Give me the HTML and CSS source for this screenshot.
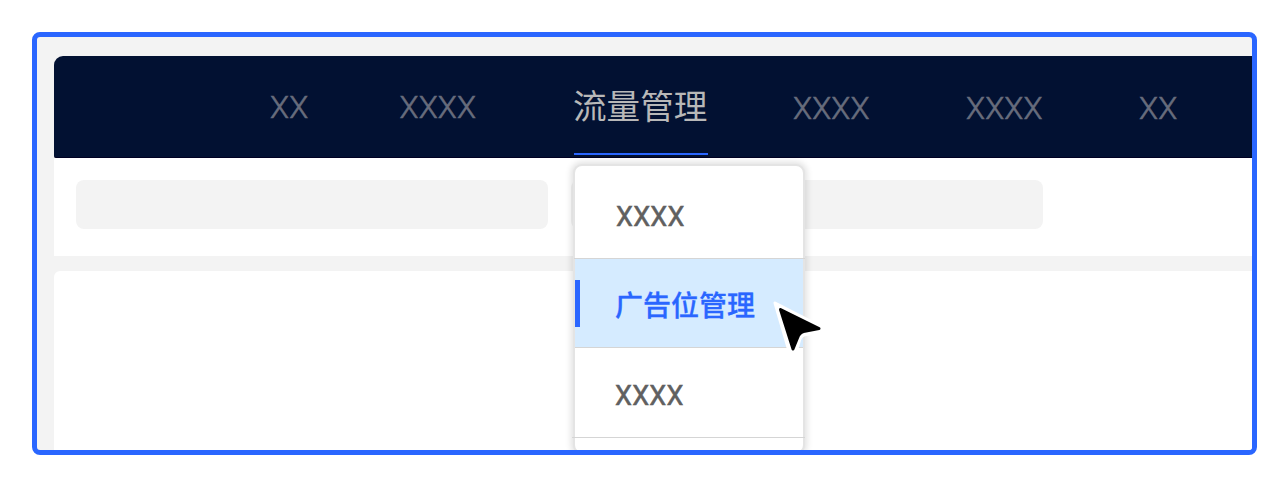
FILE: index.html
```html
<!DOCTYPE html>
<html lang="zh-CN">
<head>
<meta charset="utf-8">
<title>流量管理</title>
<link rel="stylesheet" href="styles.css">
</head>
<body>
<div class="frame">
  <nav class="nav">
    <span class="tab tab-1">XX</span>
    <span class="tab tab-2">XXXX</span>
    <span class="tab-active">流量管理</span>
    <span class="tab tab-4">XXXX</span>
    <span class="tab tab-5">XXXX</span>
    <span class="tab tab-6">XX</span>
  </nav>
  <section class="toolbar">
    <div class="field"></div>
    <div class="field"></div>
  </section>
  <section class="content"></section>
  <div class="menu">
    <div class="item">XXXX</div>
    <div class="item selected">广告位管理</div>
    <div class="item third">XXXX</div>
    <div class="item last"></div>
  </div>
  <svg class="cursor" width="56" height="60" viewBox="770 296 56 60">
    <path d="M775 303L823 327.500Q825 331 819 332L804 335Q800 337 799 342L796 352Q793 357 789 351Z" fill="#fff" stroke="#fff" stroke-width="3" stroke-linejoin="round"/>
    <path d="M780.500 309.500L819 328.500L803.500 331.600Q799 333 797.500 338L793 349Z" fill="#000" stroke="#000" stroke-width="3" stroke-linejoin="round"/>
  </svg>
</div>
</body>
</html>
```
FILE: styles.css
```css
* {
  box-sizing: border-box;
}

body {
  margin: 0;
  padding: 32px;
  background: #fff;
}

.frame {
  position: relative;
  display: flex;
  flex-direction: column;
  width: 1225px;
  height: 423px;
  padding: 19px 0 0 17px;
  border: 5px solid #2a66ff;
  border-radius: 8px;
  background: #f3f3f3;
  overflow: hidden;
}

.nav {
  display: flex;
  flex: none;
  height: 102px;
  padding-left: 216px;
  border-bottom: 1px solid #000022;
  border-radius: 9px 0 0 2px;
  background: #021132;
  white-space: nowrap;
}

.tab {
  flex: none;
  padding-top: 34px;
  color: #676c7c;
  font: 300 31px/36px Roboto, sans-serif;
  letter-spacing: 0.2px;
  -webkit-text-stroke: 0.6px #676c7c;
}

.tab-1 { width: 129.5px; }
.tab-2 { width: 173.5px; }
.tab-4 { width: 173px; padding-top: 35px; }
.tab-5 { width: 173px; padding-top: 35px; }
.tab-6 { padding-top: 35px; }

.tab-active {
  flex: none;
  width: 134px;
  height: 99px;
  margin: 0 85px 0 1px;
  padding-top: 24px;
  border-bottom: 2px solid #2a66ff;
  color: #b8b8b8;
  font: 400 33.6px/50px "Noto Sans CJK SC", sans-serif;
  text-indent: -1px;
}

.toolbar {
  display: flex;
  flex: none;
  gap: 23px;
  height: 98px;
  padding: 22px;
  background: #fff;
}

.field {
  width: 472px;
  height: 49px;
  border-radius: 8px;
  background: #f3f3f3;
}

.content {
  flex: 1;
  margin-top: 15px;
  border-radius: 6px 0 0 0;
  background: #fff;
}

.menu {
  position: absolute;
  left: 538px;
  top: 129px;
  width: 228px;
  height: 286px;
  border-radius: 7px;
  background: #fff;
  box-shadow: 0 0 0 2px #e4e4e4, 0 0 6px 4px rgba(0, 0, 0, 0.12);
}

.item {
  height: 93px;
  margin: 0 -2px 0 -1px;
  padding: 33px 0 0 42px;
  border-bottom: 1px solid #d5d5d5;
  color: #606060;
  font: 400 27px/36px Roboto, sans-serif;
  letter-spacing: 0.2px;
  -webkit-text-stroke: 0.5px #606060;
}

.selected {
  display: flex;
  height: 89px;
  margin: 0;
  padding: 21px 0 0;
  background: #d5ebff;
  color: #2a66ff;
  font: 500 28px/49px "Noto Sans CJK SC", sans-serif;
  letter-spacing: 0;
  -webkit-text-stroke: 0.3px #2a66ff;
}

.selected::before {
  content: "";
  width: 5px;
  height: 47px;
  margin-right: 35px;
  background: #2a66ff;
}

.third {
  height: 90px;
  margin-left: -3px;
  padding: 30px 0 0 43px;
}

.last {
  height: 12px;
  padding: 0;
  border: 0;
}

.cursor {
  position: absolute;
  left: 733px;
  top: 259px;
}
```
